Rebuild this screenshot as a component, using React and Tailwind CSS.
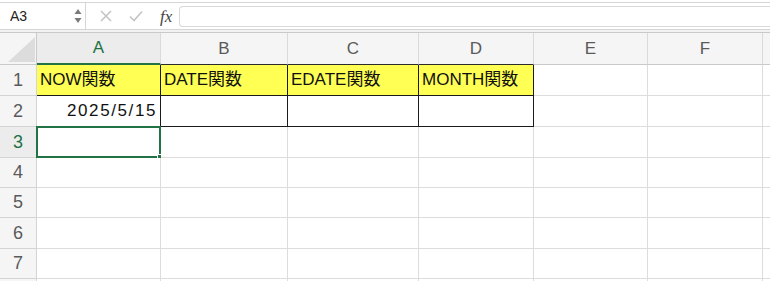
import React from "react";

const COLS = [
  { key: "A", w: "w-[124px]" },
  { key: "B", w: "w-[127px]" },
  { key: "C", w: "w-[131px]" },
  { key: "D", w: "w-[115px]" },
  { key: "E", w: "w-[114px]" },
  { key: "F", w: "w-[115px]" },
];

const ROWS = [
  { n: 1, h: "h-[31px]" },
  { n: 2, h: "h-[31px]" },
  { n: 3, h: "h-[31px]" },
  { n: 4, h: "h-[30px]" },
  { n: 5, h: "h-[30px]" },
  { n: 6, h: "h-[31px]" },
  { n: 7, h: "h-[30px]" },
  { n: 8, h: "h-[30px]" },
];

const DATA = {
  A1: "NOW関数",
  B1: "DATE関数",
  C1: "EDATE関数",
  D1: "MONTH関数",
};

const inTable = (col, row) => ["A", "B", "C", "D"].includes(col) && row <= 2;

const Toolbar = () => (
  <>
    <div className="h-[2px] bg-white" />
    <div className="flex h-[28px] items-center border-y border-[#d6d6d6] bg-white">
      {/* NAME BOX */}
      <div className="flex h-full w-[86px] items-center justify-between border-r border-[#d6d6d6] pl-[10px] pr-[3px]">
        <span className="text-[14px] text-[#222]">A3</span>
        <svg width="8" height="18" viewBox="0 0 8 18">
          <path d="M4 2 L7.5 7 L0.5 7 Z" fill="#7a7a7a" />
          <path d="M4 16 L7.5 11 L0.5 11 Z" fill="#7a7a7a" />
        </svg>
      </div>

      {/* ACTIONS */}
      <div className="ml-[14px] flex items-center gap-[17px]">
        <svg width="12" height="12" viewBox="0 0 12 12">
          <path d="M1 1 L11 11 M11 1 L1 11" stroke="#c4c4c4" strokeWidth="1.6" />
        </svg>
        <svg width="14" height="12" viewBox="0 0 14 12">
          <path d="M1 6.5 L5 10.5 L13 1.5" stroke="#c4c4c4" strokeWidth="1.6" fill="none" />
        </svg>
        <span className="font-['Liberation_Serif',serif] text-[17px] italic leading-none text-[#444]">
          fx
        </span>
      </div>

      {/* FORMULA INPUT */}
      <div className="ml-[7px] h-[21px] flex-1 rounded-l-[4px] border border-r-0 border-[#d9d9d9] bg-white" />
    </div>
    <div className="h-[3px] border-b border-[#c9c9c9] bg-[#f2f2f2]" />
  </>
);

const HeaderRow = () => (
  <div className="flex h-[32px] bg-[#f5f5f5]">
    <div className="flex w-[37px] shrink-0 items-end border-r border-b border-[#c9c9c9] pb-[1px]">
      <svg width="36" height="30" viewBox="0 0 36 30">
        <path d="M8 29 L35 29 L35 4 Z" fill="#dcdcdc" />
      </svg>
    </div>
    {COLS.map((c) => {
      const selected = c.key === "A";
      const dark = ["B", "C", "D"].includes(c.key);
      return (
        <div
          key={c.key}
          className={`flex shrink-0 items-center justify-center border-r border-[#dadada] text-[17px] ${c.w} ${
            selected
              ? "border-b-2 border-b-[#217346] bg-[#ececec] text-[#1e7145]"
              : dark
                ? "border-b border-b-[#2b2b2b] text-[#5a5a5a]"
                : "border-b border-b-[#c9c9c9] text-[#5a5a5a]"
          }`}
        >
          {c.key}
        </div>
      );
    })}
    <div className="flex-1 border-b border-[#c9c9c9]" />
  </div>
);

const Row = ({ n, h }) => {
  const selectedRow = n === 3;
  return (
    <div className={`flex ${h}`}>
      <div
        className={`flex w-[37px] shrink-0 items-center justify-center border-r border-b border-[#d4d4d4] text-[18px] ${
          selectedRow ? "bg-[#ececec] text-[#1e7145]" : "bg-[#f5f5f5] text-[#5a5a5a]"
        }`}
      >
        {n < 8 ? n : ""}
      </div>
      {COLS.map((c) => {
        const id = `${c.key}${n}`;
        const table = inTable(c.key, n);
        const header = table && n === 1;
        return (
          <div
            key={id}
            className={`relative flex shrink-0 items-center border-r border-b text-[17px] text-[#111] ${c.w} ${
              table ? "border-[#1a1a1a]" : "border-[#dcdcdc]"
            } ${header ? "bg-[#ffff54]" : "bg-white"}`}
          >
            {DATA[id] && <span className="pl-[3px]">{DATA[id]}</span>}
            {id === "A2" && (
              <span className="ml-auto pr-[3px] tracking-[1.6px]">2025/5/15</span>
            )}
            {id === "A3" && (
              <>
                <div className="absolute -top-[1px] -left-[1px] -right-[1px] -bottom-[1px] border-2 border-[#217346]" />
                <div className="absolute -right-[4px] -bottom-[4px] h-[7px] w-[7px] border border-white bg-[#217346]" />
              </>
            )}
          </div>
        );
      })}
      <div className="flex-1 border-b border-[#dcdcdc]" />
    </div>
  );
};

export default function App() {
  return (
    <div className="h-[281px] w-[770px] overflow-hidden bg-white font-['Liberation_Sans','Noto_Sans_CJK_JP',sans-serif]">
      <Toolbar />
      <HeaderRow />
      {ROWS.map((r) => (
        <Row key={r.n} n={r.n} h={r.h} />
      ))}
    </div>
  );
}
